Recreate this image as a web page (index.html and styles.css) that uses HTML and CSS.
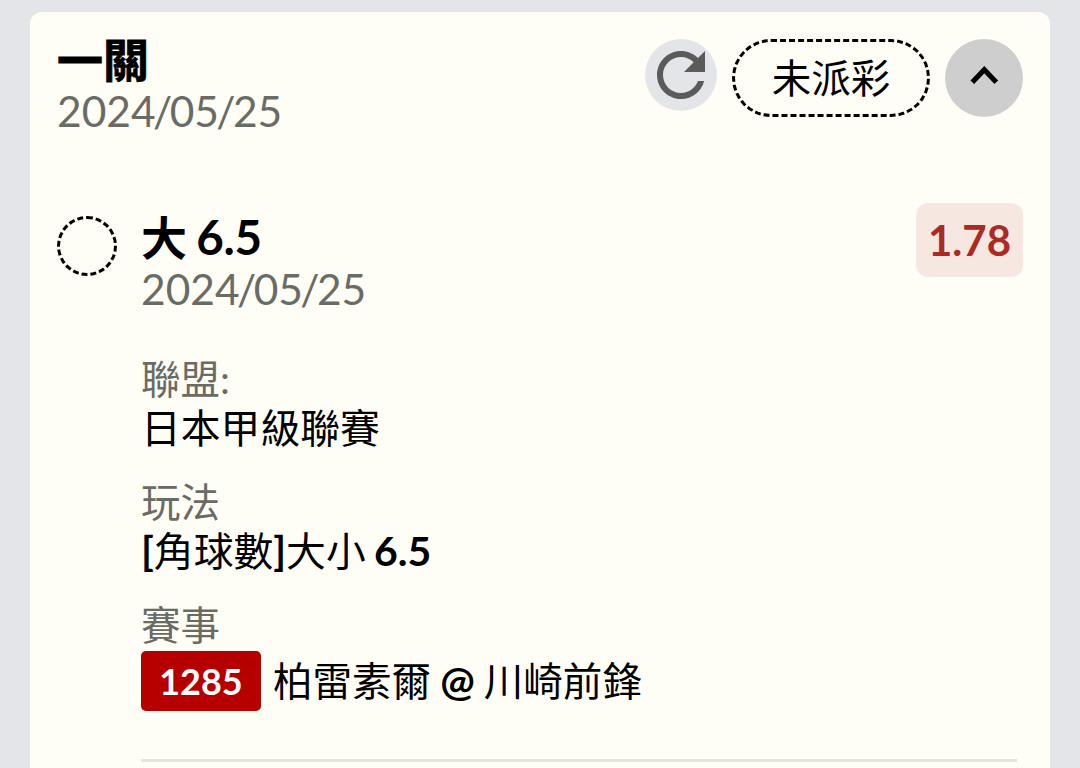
FILE: index.html
```html
<!DOCTYPE html>
<html lang="zh-TW">
<head>
    <meta charset="UTF-8">
    <meta name="viewport" content="width=device-width, initial-scale=1.0">
    <title>未派彩注單</title>
    <link rel="stylesheet" href="styles.css">
</head>
<body>
    <div class="card">
        <!-- 標題列 -->
        <div class="card-header">
            <div class="header-info">
                <div class="card-title">一關</div>
                <div class="date">202<span class="tight">4/</span>0<span class="tight">5/</span>25</div>
            </div>
            <div class="actions">
                <button class="refresh" aria-label="重新整理">
                    <svg width="72" height="72" viewBox="0 0 24 24">
                        <path d="M17.65 6.35C16.2 4.9 14.21 4 12 4c-4.42 0-7.99 3.58-7.99 8s3.57 8 7.99 8c3.73 0 6.84-2.55 7.73-6h-2.08c-.82 2.33-3.04 4-5.65 4-3.31 0-6-2.69-6-6s2.69-6 6-6c1.66 0 3.14.69 4.22 1.78L13 11h7V4l-2.35 2.35z" fill="#5b5b5b"/>
                    </svg>
                </button>
                <div class="status">未派彩</div>
                <button class="toggle" aria-label="收合">
                    <svg width="78" height="78" viewBox="0 0 78 78">
                        <path d="M27.3 43.3L39.3 30.7L51.3 43.3" fill="none" stroke="#000" stroke-width="5"/>
                    </svg>
                </button>
            </div>
        </div>

        <!-- 注單內容 -->
        <div class="bet">
            <div class="bet-mark"></div>
            <div class="bet-body">
                <div class="bet-top">
                    <div class="bet-info">
                        <div class="bet-title">大 <span class="line">6.5</span></div>
                        <div class="date">202<span class="tight">4/</span>0<span class="tight">5/</span>25</div>
                    </div>
                    <div class="odds">1.78</div>
                </div>
                <div class="field">
                    <div class="label">聯盟:</div>
                    <div class="value">日本甲級聯賽</div>
                </div>
                <div class="field">
                    <div class="label">玩法</div>
                    <div class="value"><b>[</b>角球數<b>]</b>大小 <b>6.5</b></div>
                </div>
                <div class="field">
                    <div class="label">賽事</div>
                    <div class="match">
                        <span class="match-no">1285</span>
                        <span class="match-teams">柏雷素爾 <b>@</b> 川崎前鋒</span>
                    </div>
                </div>
                <div class="divider"></div>
            </div>
        </div>
    </div>
</body>
</html>
```
FILE: styles.css
```css
* {
    box-sizing: border-box;
}
body {
    margin: 0;
    height: 768px;
    padding: 12px 30px 0;
    background-color: #e4e5e8;
    font-family: Lato, "Noto Sans CJK TC", sans-serif;
    color: #000;
}
.card {
    height: 756px;
    padding: 27px 27px 0 28px;
    background-color: #fffef6;
    border-radius: 12px 12px 0 0;
}

/* 標題列 */
.card-header {
    display: flex;
    justify-content: space-between;
    height: 164px;
}
.header-info {
    margin-left: -1px;
}
.card-title {
    font-size: 46px;
    line-height: 42px;
    font-weight: bold;
    -webkit-text-stroke: 0.8px #000;
}
.date {
    font-size: 42.5px;
    line-height: 60px;
    color: #6b6b66;
}
.tight {
    letter-spacing: -2.6px;
}
.actions {
    display: flex;
    align-items: flex-start;
    gap: 15px;
}
button {
    display: block;
    border: 0;
    padding: 0;
    border-radius: 50%;
}
button svg {
    display: block;
}
.refresh {
    width: 72px;
    height: 72px;
    background-color: #e4e5e8;
}
.status {
    width: 198px;
    height: 78px;
    border: 3px dashed #000;
    border-radius: 39px;
    font-size: 39.5px;
    line-height: 72px;
    text-align: center;
}
.toggle {
    width: 78px;
    height: 78px;
    background-color: #cecece;
}

/* 注單內容 */
.bet {
    display: flex;
    gap: 24px;
    margin-left: -1px;
}
.bet-mark {
    flex: none;
    width: 60px;
    height: 60px;
    margin-top: 13px;
    border: 3px dashed #000;
    border-radius: 50%;
}
.bet-body {
    flex: 1;
}
.bet-top {
    display: flex;
    justify-content: space-between;
    align-items: flex-start;
    height: 151px;
}
.bet-info {
    padding-top: 12px;
}
.bet-title {
    font-size: 46px;
    line-height: 43px;
    font-weight: bold;
    word-spacing: -2px;
}
.line {
    font-size: 47.5px;
    letter-spacing: -0.3px;
}
.odds {
    width: 107px;
    height: 74px;
    border-radius: 12px;
    background-color: #f7e7e1;
    color: #a92b24;
    font-size: 42px;
    line-height: 75px;
    font-weight: bold;
    text-align: center;
}
.field {
    margin-bottom: 25px;
}
.label,
.value {
    font-size: 39.5px;
    line-height: 49px;
    white-space: nowrap;
}
.label {
    color: #6b6b66;
}
.value {
    font-size: 39.8px;
    word-spacing: -2px;
}
.value b {
    font-size: 41px;
}
.match {
    display: flex;
    gap: 12px;
    margin-top: 2px;
    font-size: 39.5px;
    line-height: 60px;
}
.match-teams {
    word-spacing: -1px;
}
.match-teams b {
    font-size: 41px;
}
.match-no {
    width: 120px;
    height: 60px;
    border-radius: 5px;
    background-color: #b60000;
    color: #fff;
    font-size: 36px;
    font-weight: bold;
    text-align: center;
}
.divider {
    height: 3px;
    margin: 48px 6px 0 0;
    background-color: #e5e4dd;
}
```
